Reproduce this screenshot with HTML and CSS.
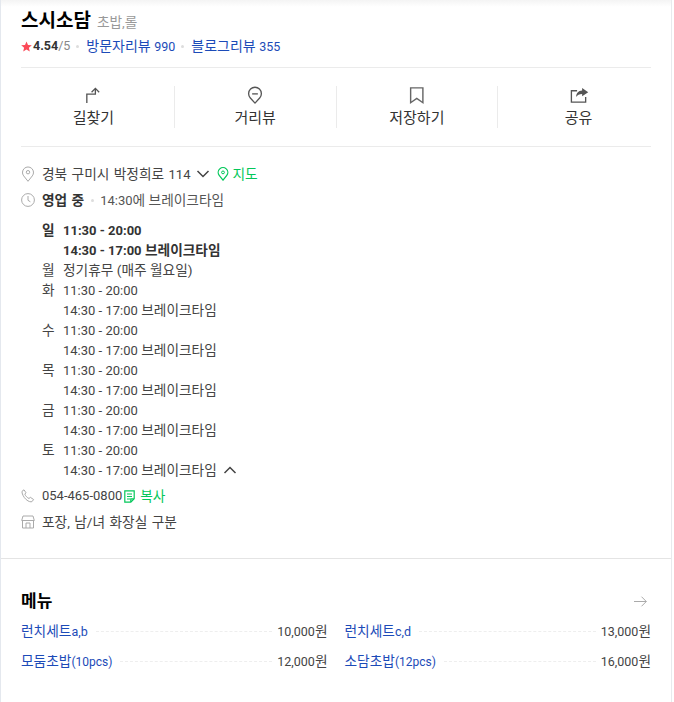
FILE: index.html
```html
<!DOCTYPE html>
<html lang="ko">
<head>
<meta charset="utf-8">
<title>스시소담</title>
<link rel="stylesheet" href="styles.css">
</head>
<body>
<main class="panel">
  <section class="summary">
    <div class="title-row"><h1 class="name">스시소담</h1><span class="category">초밥,롤</span></div>
    <div class="rating-row">
      <svg class="star" width="11" height="11" viewBox="0 0 11 11"><path d="M5.5.4l1.5 3.5 3.8.3-2.900 2.500.9 3.700-3.300-2-3.300 2 .9-3.700L.2 4.200 4 3.900z"/></svg>
      <b class="score num">4.54</b><span class="of num">/5</span><i class="dot"></i>
      <a class="link">방문자리뷰 <span class="num">990</span></a><i class="dot"></i><a class="link">블로그리뷰 <span class="num">355</span></a>
    </div>
  </section>
  <div class="actions">
    <nav class="action-list">
      <div class="action">
        <svg class="action-icon" width="20" height="20" viewBox="0 0 20 20"><path d="M3.500 18V8.500h9V2.500M8.500 6.500l4-4 4 4" fill="none" stroke="#555" stroke-width="1.400"/></svg>
        <span>길찾기</span>
      </div>
      <div class="action">
        <svg class="action-icon" width="20" height="20" viewBox="0 0 20 20"><path d="M10 18l-4.900-5.400a6.700 6.700 0 1 1 9.800 0z" fill="none" stroke="#555" stroke-width="1.400" stroke-linejoin="round"/><path d="M7 8.300h6" stroke="#555" stroke-width="1.400"/></svg>
        <span>거리뷰</span>
      </div>
      <div class="action">
        <svg class="action-icon" width="20" height="20" viewBox="0 0 20 20"><path d="M3.300 2h12.900v15.600l-6.450-4.600-6.450 4.600z" fill="none" stroke="#666" stroke-width="1.500"/></svg>
        <span>저장하기</span>
      </div>
      <div class="action">
        <svg class="action-icon" width="20" height="20" viewBox="0 0 20 20"><path d="M8 5H2v12h15v-5.500" fill="none" stroke="#555" stroke-width="1.400"/><path d="M13.300 2.200l6.400 4.300-6.400 4.300V8.300c-3 0-5 1-6.300 3.400 0-4 2.200-6.800 6.300-7z" fill="#555"/></svg>
        <span>공유</span>
      </div>
    </nav>
  </div>
  <section class="info">
    <div class="info-row address">
      <svg class="info-icon" width="14" height="16" viewBox="0 0 14 16"><path d="M7 15.300L2.700 9.900a5.500 5.500 0 1 1 8.600 0z" fill="none" stroke="#aaa"/><circle cx="7" cy="6.200" r="1.700" fill="none" stroke="#aaa"/></svg>
      <span>경북 구미시 박정희로 <span class="num">114</span></span>
      <svg class="chevron" width="14" height="8" viewBox="0 0 14 8"><path d="M1.500 1l5.500 5.500L12.500 1" fill="none" stroke="#444" stroke-width="1.500"/></svg>
      <svg class="map-pin" width="12" height="14" viewBox="0 0 12 14"><path d="M6 13.200L2.200 8.400a4.800 4.800 0 1 1 7.600 0z" fill="none" stroke="#03c75a" stroke-width="1.200"/><circle cx="6" cy="5.400" r="1.400" fill="none" stroke="#03c75a"/></svg>
      <span class="green">지도</span>
    </div>
    <div class="info-row open-row">
      <svg class="info-icon" width="14" height="14" viewBox="0 0 14 14"><circle cx="7" cy="7" r="6.400" fill="none" stroke="#aaa"/><path d="M7 3v4.300l2.400 1.500" fill="none" stroke="#aaa"/></svg>
      <b class="open">영업 중</b><i class="dot"></i><span class="next"><span class="num">14:30</span>에 브레이크타임</span>
    </div>
    <dl class="hours">
      <div class="day today"><dt>일</dt><dd><div class="num">11:30 - 20:00</div><div><span class="num">14:30 - 17:00</span> 브레이크타임</div></dd></div>
      <div class="day"><dt>월</dt><dd><div>정기휴무 (매주 월요일)</div></dd></div>
      <div class="day"><dt>화</dt><dd><div class="num">11:30 - 20:00</div><div><span class="num">14:30 - 17:00</span> 브레이크타임</div></dd></div>
      <div class="day"><dt>수</dt><dd><div class="num">11:30 - 20:00</div><div><span class="num">14:30 - 17:00</span> 브레이크타임</div></dd></div>
      <div class="day"><dt>목</dt><dd><div class="num">11:30 - 20:00</div><div><span class="num">14:30 - 17:00</span> 브레이크타임</div></dd></div>
      <div class="day"><dt>금</dt><dd><div class="num">11:30 - 20:00</div><div><span class="num">14:30 - 17:00</span> 브레이크타임</div></dd></div>
      <div class="day"><dt>토</dt><dd><div class="num">11:30 - 20:00</div><div class="last-line"><span><span class="num">14:30 - 17:00</span> 브레이크타임</span><svg class="chevron" width="14" height="8" viewBox="0 0 14 8"><path d="M1.500 7L7 1.500 12.500 7" fill="none" stroke="#444" stroke-width="1.500"/></svg></div></dd></div>
    </dl>
    <div class="info-row phone">
      <svg class="info-icon" width="14" height="14" viewBox="0 0 14 14"><path d="M1 2.300L3 .8l2 3-1.200 1.300c.6 1.700 2.400 3.600 4.200 4.400l1.300-1.200 3.300 2.200-1.500 2c-1 .8-3.500.2-6-2C2.500 8.300.6 4 1 2.300z" fill="none" stroke="#aaa"/></svg>
      <span class="num">054-465-0800</span>
      <svg class="copy-icon" width="11" height="13" viewBox="0 0 11 13"><path d="M.8.8h9.400v8l-3.400 3.400H.8zM3 4h5M3 6.500h5M3 9h3M6.800 12.200V8.800h3.400" fill="none" stroke="#03c75a" stroke-width="1.200"/></svg>
      <span class="green">복사</span>
    </div>
    <div class="info-row">
      <svg class="info-icon" width="14" height="14" viewBox="0 0 14 14"><path d="M1.500 5.500V13h11V5.500M.7 5.500L2 1h10l1.300 4.500zM5 13V8h4v5" fill="none" stroke="#aaa"/></svg>
      <span>포장, 남/녀 화장실 구분</span>
    </div>
  </section>
  <section class="menu">
    <div class="menu-head">
      <h2>메뉴</h2>
      <svg class="more" width="13" height="11" viewBox="0 0 13 11"><path d="M0 5.500h12.300M7.500.7l4.800 4.800-4.800 4.800" fill="none" stroke="#aaa"/></svg>
    </div>
    <ul class="menu-grid">
      <li class="menu-item"><a class="link">런치세트<span class="num">a,b</span></a><i class="leader"></i><span><span class="num">10,000</span>원</span></li>
      <li class="menu-item"><a class="link">런치세트<span class="num">c,d</span></a><i class="leader"></i><span><span class="num">13,000</span>원</span></li>
      <li class="menu-item"><a class="link">모둠초밥<span class="pcs">(10pcs)</span></a><i class="leader"></i><span><span class="num">12,000</span>원</span></li>
      <li class="menu-item"><a class="link">소담초밥<span class="pcs">(12pcs)</span></a><i class="leader"></i><span><span class="num">16,000</span>원</span></li>
    </ul>
  </section>
</main>
</body>
</html>
```
FILE: styles.css
```css
* { box-sizing: border-box; }
html, body { margin: 0; height: 100%; overflow: hidden; background: #fff; }
body {
  font-family: Roboto, "Noto Sans CJK KR", sans-serif;
  font-size: 13.7px;
  color: #444;
  line-height: 20px;
}
.num { font-size: 13px; }
.pcs { font-size: 12px; }
.panel {
  width: 672px;
  height: 702px;
  border-left: 1px solid #e4e8ee;
  border-right: 1px solid #e8eaed;
  background: linear-gradient(#f4f4f4, #fff 7px);
}
h1, h2, dl, dd, ul { margin: 0; padding: 0; }
ul { list-style: none; }
i { font-style: normal; }
.summary { margin: 0 20px; height: 68px; padding-top: 8px; border-bottom: 1px solid #ebebeb; }
.title-row { display: flex; align-items: baseline; gap: 6px; height: 26px; }
.name { font-size: 19px; line-height: 26px; font-weight: 700; color: #000; }
.category { color: #999; }
.rating-row { display: flex; align-items: center; height: 20px; margin-top: 2px; font-size: 14px; }
.rating-row .num { font-size: 12.5px; }
.star { fill: #fb4a58; margin-right: 1px; }
.score { font-weight: 700; color: #333; }
.of { color: #888; }
.dot { width: 3px; height: 3px; border-radius: 50%; background: #ddd; margin: 0 7px 0 6px; }
.link { color: #1c4bb8; }
.actions { margin: 0 20px; height: 79px; padding-top: 18px; border-bottom: 1px solid #ebebeb; }
.action-list { display: flex; margin: 0 -8px 0 -8px; }
.action {
  flex: 1;
  height: 42px;
  display: flex;
  flex-direction: column;
  align-items: center;
  gap: 3px;
  font-size: 15px;
  color: #333;
  border-right: 1px solid #ebebeb;
}
.action:last-child { border-right: 0; }
.action-icon { display: block; }
.info { padding: 17px 20px 0; }
.info-row { display: flex; align-items: center; height: 20px; margin-bottom: 6px; word-spacing: 1px; }
.info-icon { width: 14px; margin-right: 7px; flex: none; }
.chevron { margin-left: 6px; }
.map-pin { margin: 0 3px 0 7px; }
.copy-icon { margin: 0 5px 0 2px; }
.green { color: #03c75a; }
.open { color: #333; font-weight: 700; }
.next { color: #555; word-spacing: 0; }
.open-row .dot { margin: 0 6px 0 7px; }
.hours { padding: 4px 0 6px 21px; }
.day { display: flex; }
.day dt { width: 21px; flex: none; }
.day dd div { height: 20px; }
.day dd div.num { line-height: 22px; }
.today { font-weight: 700; color: #333; }
.last-line { display: flex; align-items: center; }
.menu { margin-top: 26px; border-top: 1px solid #e4e4e4; padding: 30px 20px 0; }
.menu-head { display: flex; align-items: center; justify-content: space-between; height: 24px; margin-bottom: 8px; }
.menu-head h2 { font-size: 17px; font-weight: 700; color: #000; }
.more { margin-right: 4px; }
.menu-grid { display: grid; grid-template-columns: 1fr 1fr; column-gap: 17px; row-gap: 10px; }
.menu-item { display: flex; align-items: center; height: 20px; }
.menu-item .num { font-size: 12.5px; }
.leader { flex: 1; border-top: 1px dashed #eee; margin: 0 5px 0 8px; }
```
